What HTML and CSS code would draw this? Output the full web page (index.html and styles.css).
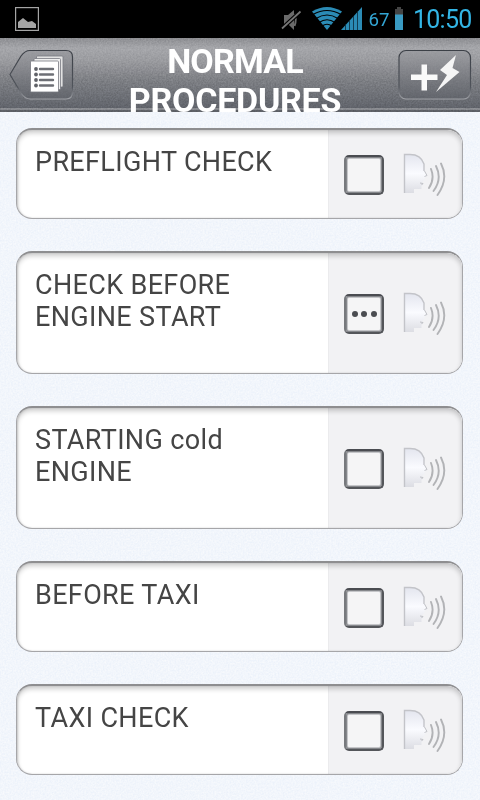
FILE: index.html
```html
<!DOCTYPE html>
<html lang="en">
<head>
<meta charset="utf-8">
<title>Normal Procedures</title>
<link rel="stylesheet" href="styles.css">
</head>
<body>
<svg class="defs" width="0" height="0">
  <defs>
    <filter id="grain" x="0" y="0" width="100%" height="100%" color-interpolation-filters="sRGB">
      <feTurbulence type="fractalNoise" baseFrequency="0.6" numOctaves="2" seed="4"/>
      <feColorMatrix type="matrix" values="1.500 0 0 0 -.25  1.500 0 0 0 -.25  1.500 0 0 0 -.25  0 0 0 0 1"/>
    </filter>
    <linearGradient id="face" x1="0" y1="0" x2="0" y2="1">
      <stop offset="0" stop-color="#e3e5ee"/><stop offset=".5" stop-color="#fafbff"/><stop offset="1" stop-color="#dcdde3"/>
    </linearGradient>
    <linearGradient id="edge" x1="0" y1="0" x2="0" y2="1">
      <stop offset="0" stop-color="#3c4047"/><stop offset=".75" stop-color="#50545b"/><stop offset="1" stop-color="#a0a2a7"/>
    </linearGradient>
    <linearGradient id="btn" x1="0" y1="0" x2="0" y2="1">
      <stop offset="0" stop-color="#96979c"/><stop offset="1" stop-color="#5d6067"/>
    </linearGradient>
    <symbol id="voice" viewBox="0 0 44 44">
      <path d="M1 1H7C15 1 20 6 21.500 12V18L24 23L21.500 25V27L19 29L20.500 31L18.500 33V36H11V40H1Z" fill="url(#face)"/>
      <path d="M1.500 40V1.500H7C14 1.500 19 5 21 11V18" fill="none" stroke="#c3c4c9" stroke-width="1.400"/>
      <path d="M21.500 18L24 22.500L21.500 23.500M17 30L20 30.500L18.500 32" fill="none" stroke="#c0c1c6" stroke-width="1"/>
      <path d="M28 16Q32 26 26 35M33 13Q39.500 26 30.500 38M38 10.500Q46 26 34.500 42" fill="none" stroke="#b2b3b6" stroke-width="1.900" stroke-linecap="round"/>
    </symbol>
  </defs>
</svg>
<div class="screen">
  <svg class="grain page-grain" width="480" height="688"><rect width="480" height="688" filter="url(#grain)"/></svg>
  <div class="status">
    <svg class="picture" width="24" height="24" viewBox="0 0 24 24">
      <rect x=".6" y=".6" width="22.800" height="22.800" fill="none" stroke="#a5a5a5" stroke-width="1.200"/>
      <path d="M3 21V15L8 11L13 15L17 14L21 17V21Z" fill="#a5a5a5"/>
    </svg>
    <svg class="signals" width="130" height="38" viewBox="276 0 130 38">
      <path d="M284 15H288L294 10V30L288 24H284Z" fill="#6a6a6a"/>
      <path d="M294.500 14Q297 19 294.500 26" fill="none" stroke="#6a6a6a" stroke-width="2"/>
      <path d="M282 28.500L300.500 11.500" stroke="#000" stroke-width="4"/>
      <path d="M282 28.500L300.500 11.500" stroke="#777" stroke-width="1.700"/>
      <path d="M327 30L312 11.500Q327 2.500 342 11.500Z" fill="#2b8bb5"/>
      <g fill="none" stroke="#000" stroke-width="1.200"><path d="M313 14.500Q327 6.500 341 14.500"/><path d="M316 18.500Q327 11.500 338 18.500"/><path d="M319 22.500Q327 17 335 22.500"/><path d="M322 26Q327 22.500 332 26"/></g>
      <path d="M341 30L362 7V30Z" fill="#2b8bb5"/>
      <path d="M345.500 24V30M349.500 20V30M353.500 16V30M357.500 11V30" stroke="#0b2a38" stroke-width=".8"/>
      <path d="M397 7H401V9H403V15H395V9H397Z" fill="#444"/>
      <rect x="395" y="14.500" width="8" height="15.500" fill="#3a9bc3"/>
      <text x="368.500" y="26" class="percent" textLength="21" lengthAdjust="spacingAndGlyphs">67</text>
    </svg>
    <span class="clock">10:50</span>
  </div>
  <div class="header">
    <svg class="grain" width="480" height="74"><rect width="480" height="74" filter="url(#grain)"/></svg>
    <svg class="back" width="65" height="52" viewBox="0 0 65 52">
      <path d="M1 25.500L12 7Q16 1.500 21 1.500H57Q63.500 1.500 63.500 8V43Q63.500 50 57 50H21Q16 50 12 44Z" fill="url(#btn)" fill-opacity=".6" stroke="url(#edge)" stroke-width="1.200"/>
      <g stroke="#777980" stroke-width=".8"><rect x="27.500" y="7" width="26.500" height="31" rx="1" fill="#e2e2e2"/><rect x="25" y="9.500" width="26.500" height="31" rx="1" fill="#eee"/><rect x="21.500" y="12" width="28" height="31" rx="1" fill="#fff"/></g>
      <path d="M31 20H44M31 25.500H44M31 31H44M31 36.500H44" stroke="#6d6f75" stroke-width="2.400" stroke-linecap="round"/>
      <g fill="#606268"><circle cx="27" cy="20" r="1.900"/><circle cx="27" cy="25.500" r="1.900"/><circle cx="27" cy="31" r="1.900"/><circle cx="27" cy="36.500" r="1.900"/></g>
    </svg>
    <h1 class="title"><span class="first">NORMAL</span><br>PROCEDURES</h1>
    <svg class="add" width="74" height="52" viewBox="0 0 74 52">
      <rect x="1" y="1.500" width="71.500" height="48.500" rx="7" fill="url(#btn)" fill-opacity=".6" stroke="url(#edge)" stroke-width="1.200"/>
      <path d="M23.500 15.500H29V25.500H39.500V31H29V41.500H23.500V31H13V25.500H23.500Z" fill="#fafafa"/>
      <path d="M58 6L42 21L49 26L38 43L61.500 23L54.500 19Z" fill="#f5f5f5"/>
    </svg>
  </div>
  <div class="list">
    <div class="card"><div class="name">PREFLIGHT CHECK</div><div class="tools"><span class="box"></span><svg class="voice" width="44" height="44"><use href="#voice"/></svg></div></div>
    <div class="card tall"><div class="name">CHECK BEFORE<br>ENGINE START</div><div class="tools"><span class="box"><i></i><i></i><i></i></span><svg class="voice" width="44" height="44"><use href="#voice"/></svg></div></div>
    <div class="card tall"><div class="name">STARTING cold<br>ENGINE</div><div class="tools"><span class="box"></span><svg class="voice" width="44" height="44"><use href="#voice"/></svg></div></div>
    <div class="card"><div class="name">BEFORE TAXI</div><div class="tools"><span class="box"></span><svg class="voice" width="44" height="44"><use href="#voice"/></svg></div></div>
    <div class="card"><div class="name">TAXI CHECK</div><div class="tools"><span class="box"></span><svg class="voice" width="44" height="44"><use href="#voice"/></svg></div></div>
  </div>
</div>
</body>
</html>
```
FILE: styles.css
```css
* { box-sizing: border-box; }
body { margin: 0; font-family: Roboto, "Liberation Sans", sans-serif; }
.defs { position: absolute; }
.screen { position: relative; width: 480px; height: 800px; overflow: hidden; background: #f2f6fc; }
.grain { position: absolute; left: 0; top: 0; opacity: .1; mix-blend-mode: overlay; }
.page-grain { top: 112px; opacity: .5; }
.status { position: relative; display: flex; height: 38px; background: #000; }
.picture { margin: 7px 0 0 15px; }
.signals { margin-left: 237px; }
.percent { font-size: 19px; fill: #33a5d3; }
.clock { width: 58px; margin-left: 7px; font-size: 25px; line-height: 40px; color: #33b5e5; letter-spacing: -.75px; white-space: nowrap; }
.header {
  position: relative; display: flex; justify-content: space-between; height: 74px; padding: 11px 8px 0; overflow: hidden;
  background: linear-gradient(#8c8d91 0, #a5a6aa 10px, #9b9ca0 22px, #7d7f84 42px, #62656c 69px, #5e6168 70px, #8b8d92 70px, #85878c 72px, #5d6066 72px, #5d6066 74px);
}
.back, .add, .title { position: relative; flex: none; }
.back { margin-left: 1px; }
.title { width: 230px; margin: -7px 0 0 -2px; font-size: 34px; line-height: 39px; font-weight: 700; letter-spacing: -.25px; text-align: center; color: #fff; }
.first { letter-spacing: -.8px; }
.list { position: relative; display: flex; flex-direction: column; gap: 32px; padding: 16px 17px 0 16px; }
.card {
  position: relative; display: flex; height: 91px; overflow: hidden; background: #fff;
  border: 1px solid #a6a6a9; border-top: 2px solid #8e8e90; border-radius: 16px;
}
.card::after { content: ""; position: absolute; inset: 0; border-radius: 14px; box-shadow: inset 0 3px 5px rgba(0,0,0,.2), inset 1px 0 2px rgba(0,0,0,.14); }
.tall { height: 123px; }
.name { flex: 1; padding: 16px 0 0 18px; font-size: 27px; line-height: 32px; letter-spacing: .35px; color: #454545; }
.tools { display: flex; align-items: center; width: 134px; padding: 2px 0 0 15px; background: #f2f2f4; border-left: 1px solid #ebebed; }
.box {
  display: flex; justify-content: center; align-items: center; gap: 3.500px; width: 40px; height: 40px;
  border: 2px solid #54565a; border-top-color: #4a4c51; border-left-color: #77797d; border-radius: 5px;
  background: #f5f5f6; box-shadow: inset 0 0 0 1px #85878b, inset 0 0 0 2px #c5c6c9;
}
.box i { width: 6px; height: 6px; border-radius: 50%; background: #4b4d51; }
.voice { margin-left: 19px; }
```
